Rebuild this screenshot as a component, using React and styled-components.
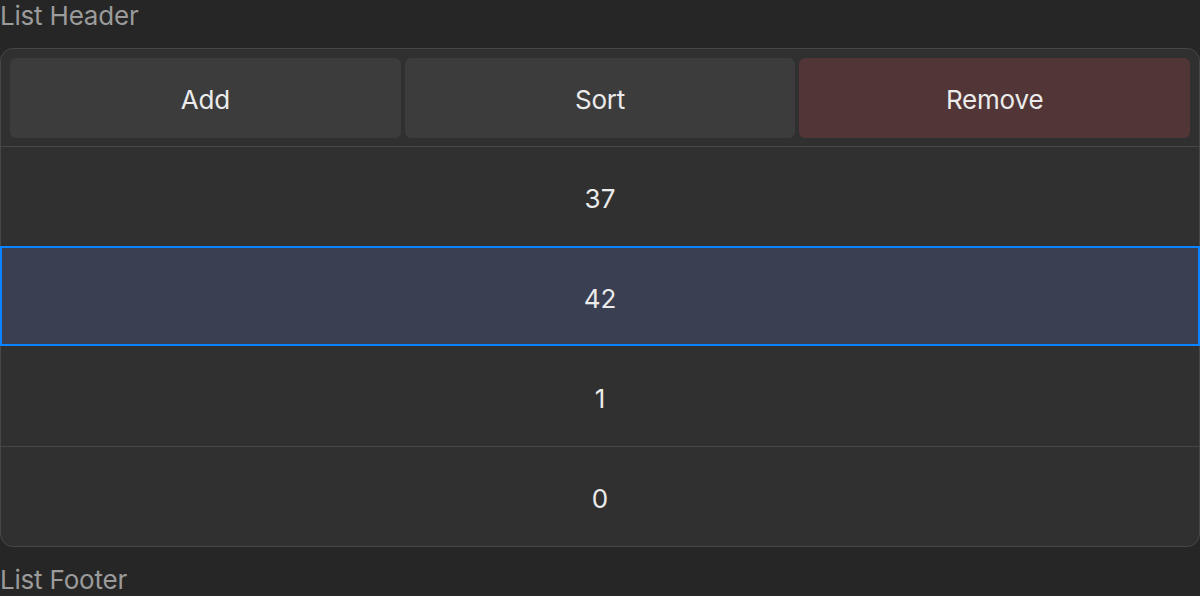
import React from "react";
import styled, { createGlobalStyle } from "styled-components";

const Global = createGlobalStyle`
  html, body { margin: 0; padding: 0; background: #262626; }
  body { font-family: Inter, "Noto Sans", sans-serif; -webkit-font-smoothing: antialiased; }
`;

const Page = styled.div`
  display: flex;
  flex-direction: column;
  width: 1200px;
  height: 596px;
  overflow: hidden;
  background: #262626;
`;

const Caption = styled.div`
  font-size: 26px;
  line-height: 32px;
  letter-spacing: -0.2px;
  color: #9b9b9b;
  margin: ${(p) => (p.$footer ? "17px 0 0" : "0 0 16px")};
`;

const Panel = styled.div`
  display: flex;
  flex-direction: column;
  background: #303030;
  border: 1px solid #474747;
  border-radius: 13px;
`;

const Toolbar = styled.div`
  display: grid;
  grid-template-columns: repeat(3, 1fr);
  gap: 4px;
  padding: 9px 9px 8px;
`;

const Button = styled.button`
  height: 80px;
  border: none;
  border-radius: 6px;
  background: ${(p) => (p.$danger ? "#523536" : "#3c3c3c")};
  color: #ebebeb;
  font-family: Inter, "Noto Sans", sans-serif;
  font-size: 26px;
  letter-spacing: -0.2px;
  padding: 2px 0 0;
`;

const Row = styled.div`
  box-sizing: border-box;
  height: 100px;
  padding-top: 4px;
  display: flex;
  align-items: center;
  justify-content: center;
  font-size: 26px;
  color: #ebebeb;
  border-top: 1px solid #474747;
  ${(p) =>
    p.$selected &&
    `
    background: #3b3f52;
    border: 2px solid #0a84ff;
    margin: 0 -1px;
  `}
  ${(p) => p.$afterSelected && `border-top: none;`}
`;

const items = [37, 42, 1, 0];
const selectedIndex = 1;

export default function App() {
  return (
    <Page>
      <Global />
      <Caption>List Header</Caption>
      <Panel>
        <Toolbar>
          <Button>Add</Button>
          <Button>Sort</Button>
          <Button $danger>Remove</Button>
        </Toolbar>
        {items.map((n, i) => (
          <Row
            key={i}
            $selected={i === selectedIndex}
            $afterSelected={i === selectedIndex + 1}
          >
            {n}
          </Row>
        ))}
      </Panel>
      <Caption $footer>List Footer</Caption>
    </Page>
  );
}
